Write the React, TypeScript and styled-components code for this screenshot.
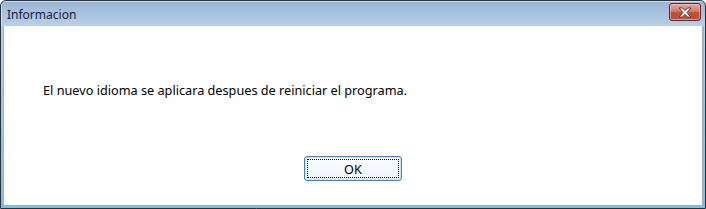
import React from 'react';
import styled, { createGlobalStyle } from 'styled-components';

const GlobalStyle = createGlobalStyle`
  html, body {
    margin: 0;
    padding: 0;
    background: #ffffff;
  }
  body {
    font-family: "Noto Sans", "Liberation Sans", sans-serif;
  }
`;

const Window = styled.div`
  box-sizing: border-box;
  width: 706px;
  height: 209px;
  display: flex;
  flex-direction: column;
  border: 1px solid #2a3138;
  border-radius: 6px 6px 0 0;
  background: linear-gradient(to bottom, #9ab6d6 0px, #b7cfe8 25px, #8fb7dc 100%);
  overflow: hidden;
`;

const TitleBar = styled.div`
  height: 25px;
  flex: none;
  display: flex;
  align-items: center;
  justify-content: space-between;
  padding: 0 4px 0 6px;
  box-shadow: inset 1px 1px 0 rgba(255, 255, 255, 0.55);
`;

const Title = styled.span`
  font-size: 12px;
  color: #1b1a36;
  margin-top: 1px;
`;

const CloseButton = styled.button`
  box-sizing: border-box;
  width: 32px;
  height: 18px;
  margin-top: -3px;
  padding: 0;
  display: flex;
  align-items: center;
  justify-content: center;
  border: 1px solid #5a2a2a;
  border-radius: 3px;
  background: linear-gradient(to bottom, #e7a89c 0%, #d27a69 45%, #c24d39 55%, #c2503a 100%);
  box-shadow: inset 0 0 0 1px rgba(255, 210, 200, 0.55);
`;

const ClientArea = styled.div`
  flex: 1;
  display: flex;
  flex-direction: column;
  align-items: stretch;
  margin: 0 2px 2px 2px;
  background: #ffffff;
  border: 1px solid #9db3c9;
  border-top: none;
  box-shadow: 0 1px 0 #5fcaee, 1px 0 0 #5fcaee;
`;

const Message = styled.p`
  margin: 57px 0 0 39px;
  font-size: 12.7px;
  line-height: 15px;
  color: #000000;
`;

const ButtonRow = styled.div`
  display: flex;
  justify-content: center;
  margin-top: 58px;
`;

const DialogButton = styled.button`
  box-sizing: border-box;
  width: 98px;
  height: 25px;
  padding: 2px;
  border: 1px solid #3b86cc;
  border-radius: 3px;
  background: linear-gradient(to bottom, #fbfdff 0%, #f5f9fd 50%, #eef4fb 100%);
  box-shadow: inset 0 0 0 1px #c4e5f6;
  font-family: inherit;
  cursor: default;
`;

const FocusRing = styled.span`
  box-sizing: border-box;
  display: flex;
  align-items: center;
  justify-content: center;
  width: 100%;
  height: 100%;
  border: 1px dotted #000000;
  font-size: 12.7px;
  color: #000000;
`;

const CloseGlyph = () => (
  <svg width="16" height="11" viewBox="0 0 16 11">
    <path
      d="M2 1 H5.5 L8 3.6 L10.5 1 H14 L10 5.5 L14 10 H10.5 L8 7.4 L5.5 10 H2 L6 5.5 Z"
      fill="#ffffff"
      stroke="#5b3b38"
      strokeWidth="1"
      strokeLinejoin="round"
    />
  </svg>
);

export default function App() {
  return (
    <>
      <GlobalStyle />
      <Window>
        <TitleBar>
          <Title>Informacion</Title>
          <CloseButton aria-label="Cerrar">
            <CloseGlyph />
          </CloseButton>
        </TitleBar>
        <ClientArea>
          <Message>El nuevo idioma se aplicara despues de reiniciar el programa.</Message>
          <ButtonRow>
            <DialogButton>
              <FocusRing>OK</FocusRing>
            </DialogButton>
          </ButtonRow>
        </ClientArea>
      </Window>
    </>
  );
}
